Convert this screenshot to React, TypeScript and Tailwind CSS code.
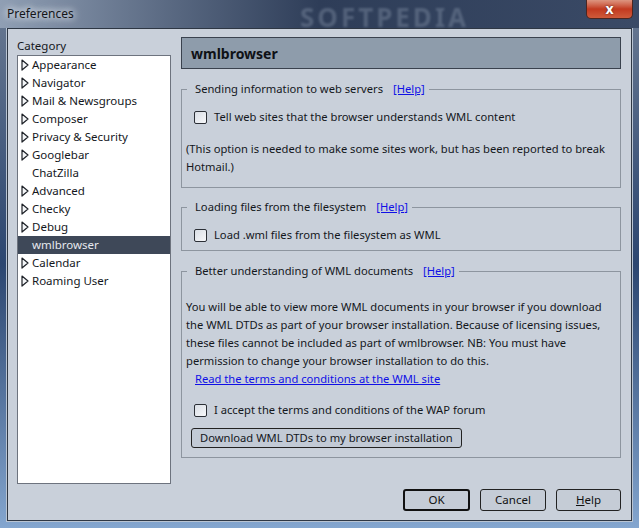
import React from 'react';

const font = { fontFamily: '"Noto Sans", "Open Sans", sans-serif' };

type Item = { label: string; kids: boolean };

const items: Item[] = [
  { label: 'Appearance', kids: true },
  { label: 'Navigator', kids: true },
  { label: 'Mail & Newsgroups', kids: true },
  { label: 'Composer', kids: true },
  { label: 'Privacy & Security', kids: true },
  { label: 'Googlebar', kids: true },
  { label: 'ChatZilla', kids: false },
  { label: 'Advanced', kids: true },
  { label: 'Checky', kids: true },
  { label: 'Debug', kids: true },
  { label: 'wmlbrowser', kids: false },
  { label: 'Calendar', kids: true },
  { label: 'Roaming User', kids: true },
];

function Twisty() {
  return (
    <svg width="8" height="12" viewBox="0 0 8 12" className="shrink-0">
      <polygon points="1,1 7,6 1,11" fill="#f4f6f8" stroke="#1e2228" strokeWidth="1.2" strokeLinejoin="round" />
    </svg>
  );
}

function CheckBox({ label }: { label: string }) {
  return (
    <label className="flex items-center h-[18px] gap-[7px] ml-[8px]">
      <span className="w-[13px] h-[13px] rounded-[2px] border border-[#2b2f36] bg-gradient-to-br from-[#d9dee5] to-[#f7f8fa]" />
      <span>{label}</span>
    </label>
  );
}

function Help() {
  return <span className="text-[#1010e6] underline ml-[10px]">[Help]</span>;
}

function Btn({ children, wide, isDefault }: { children: React.ReactNode; wide: string; isDefault?: boolean }) {
  return (
    <button
      className={
        'h-[22px] rounded-[3px] bg-[#c5ccd6] text-[#111] flex items-center justify-center ' +
        wide +
        (isDefault ? ' border-2 border-[#111]' : ' border border-[#222]')
      }
    >
      {children}
    </button>
  );
}

export default function App() {
  return (
    <div
      className="w-[639px] h-[528px] relative overflow-hidden bg-gradient-to-b from-[#6a7a92] via-[#2c4670] to-[#84a6cf] text-[11.2px] text-[#14171c]"
      style={font}
    >
      {/* title bar */}
      <div className="h-[28px] relative bg-gradient-to-r from-[#909fb4] via-[#2e3d58] to-[#3a4a66]">
        <div className="absolute left-[7px] top-[5px] text-[12px] text-[#14161a] [text-shadow:0_0_6px_#e9eef4,0_0_10px_#e9eef4]">
          Preferences
        </div>
        <div className="absolute left-[300px] top-[-2px] text-[26px] font-bold tracking-[3px] text-[#8795aa] opacity-40 blur-[1px]">
          SOFTPEDIA
        </div>
        <div className="absolute left-[586px] top-0 w-[47px] h-[19px] rounded-b-[5px] border border-t-0 border-[#4c2620] bg-gradient-to-b from-[#dc9580] via-[#c2391f] to-[#cf5a3a] flex items-center justify-center">
          <span className="text-white font-bold text-[14px] leading-none [text-shadow:0_0_2px_#3a1a14]">x</span>
        </div>
      </div>

      {/* client area */}
      <div className="ml-[7px] w-[625px] h-[493px] border border-[#2e3744] bg-[#c9d0da] shadow-[0_0_0_1px_#b9c4d2] flex flex-col pt-[8px] pl-[9px] pr-[10px]">
        <div className="flex h-[447px] gap-[10px]">
          {/* left column */}
          <div className="w-[154px] flex flex-col">
            <div className="h-[18px] flex items-center text-[11.5px]">Category</div>
            <div className="flex-1 bg-white border border-[#6d737e] text-[11.5px]">
              {items.map((it) => {
                const sel = it.label === 'wmlbrowser';
                return (
                  <div
                    key={it.label}
                    className={
                      'h-[18px] flex items-center pl-[3px] gap-[3px] ' +
                      (sel ? 'bg-[#3e4858] text-[#e6e9ee]' : '')
                    }
                  >
                    {it.kids ? <Twisty /> : <span className="w-[8px] shrink-0" />}
                    <span>{it.label}</span>
                  </div>
                );
              })}
            </div>
          </div>

          {/* right column */}
          <div className="w-[440px] flex flex-col">
            <div className="h-[32px] border border-[#3a424e] bg-[#8e9cab] flex items-center pl-[9px] text-[14px] font-bold text-[#0e1116]">
              wmlbrowser
            </div>

            <fieldset className="mt-[11px] border border-[#8d959f] px-[4px] pb-[11px]">
              <legend className="ml-[1px] pl-[8px] pr-[4px] h-[18px] flex items-center">
                Sending information to web servers
                <Help />
              </legend>
              <div className="pt-[10px]">
                <CheckBox label="Tell web sites that the browser understands WML content" />
              </div>
              <p className="mt-[14px] leading-[18px]">
                (This option is needed to make some sites work, but has been reported to break Hotmail.)
              </p>
            </fieldset>

            <fieldset className="mt-[10px] border border-[#8d959f] px-[4px] pb-[6px]">
              <legend className="ml-[1px] pl-[8px] pr-[4px] h-[18px] flex items-center">
                Loading files from the filesystem
                <Help />
              </legend>
              <div className="pt-[10px]">
                <CheckBox label="Load .wml files from the filesystem as WML" />
              </div>
            </fieldset>

            <fieldset className="mt-[11px] border border-[#8d959f] px-[4px] pb-[9px]">
              <legend className="ml-[1px] pl-[8px] pr-[4px] h-[18px] flex items-center">
                Better understanding of WML documents
                <Help />
              </legend>
              <p className="mt-[18px] leading-[18px]">
                You will be able to view more WML documents in your browser if you download the WML DTDs as part of
                your browser installation. Because of licensing issues, these files cannot be included as part of
                wmlbrowser. NB: You must have permission to change your browser installation to do this.
              </p>
              <div className="h-[18px] flex items-center ml-[9px] text-[#1010e6] underline">
                Read the terms and conditions at the WML site
              </div>
              <div className="mt-[13px]">
                <CheckBox label="I accept the terms and conditions of the WAP forum" />
              </div>
              <button className="mt-[9px] ml-[5px] h-[20px] px-[8px] rounded-[3px] border border-[#222] bg-[#c2cad5] flex items-center">
                Download WML DTDs to my browser installation
              </button>
            </fieldset>
          </div>
        </div>

        {/* dialog buttons */}
        <div className="mt-[5px] flex justify-end gap-[10px] text-[11.5px]">
          <Btn wide="w-[67px]" isDefault>
            OK
          </Btn>
          <Btn wide="w-[66px]">Cancel</Btn>
          <Btn wide="w-[65px]">
            <span>
              <span className="underline">H</span>elp
            </span>
          </Btn>
        </div>
      </div>
    </div>
  );
}
